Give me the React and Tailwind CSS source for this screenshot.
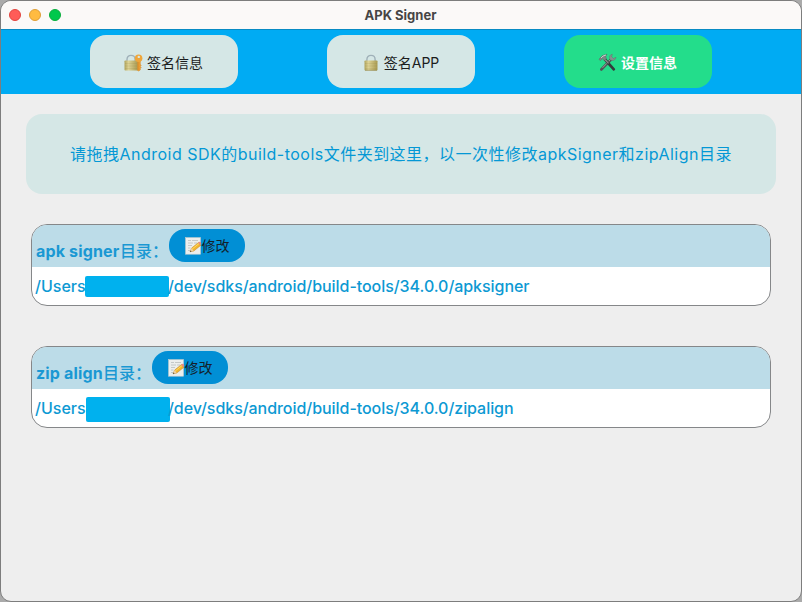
import React from 'react';

function Padlock({ className }) {
  return (
    <svg className={className} viewBox="0 0 14 18" fill="none">
      <defs>
        <linearGradient id="brass" x1="0" x2="1" y1="0" y2="0">
          <stop offset="0" stopColor="#b0a45c" />
          <stop offset="0.3" stopColor="#ddd294" />
          <stop offset="1" stopColor="#a89a52" />
        </linearGradient>
      </defs>
      <path d="M2.9 8V5.4C2.9 2.9 4.5 1.4 7 1.4s4.1 1.500 4.1 4V8" stroke="#9fb0b8" strokeWidth="1.4" />
      <rect x="0.5" y="6.500" width="13" height="10" rx="0.8" fill="url(#brass)" />
      <path d="M1 9.500h12M1 12h12M1 14.500h12" stroke="#8f8240" strokeWidth="0.400" opacity="0.400" />
      <path d="M1 16.200h12" stroke="#85783c" strokeWidth="0.600" />
    </svg>
  );
}

function LockKeyIcon() {
  return (
    <svg className="h-[18px] w-[19px] shrink-0" viewBox="0 0 19 18" fill="none">
      <defs>
        <linearGradient id="lockBody" x1="0" x2="1" y1="0" y2="0">
          <stop offset="0" stopColor="#b0a45c" />
          <stop offset="0.3" stopColor="#ddd294" />
          <stop offset="1" stopColor="#a89a52" />
        </linearGradient>
      </defs>
      <path d="M3 8V5.400C3 2.900 4.500 1.400 7 1.400s4.100 1.500 4.100 4V8" stroke="#9fb0b8" strokeWidth="1.400" />
      <path d="M13.400 6v10.400l1.200.6 1.700-1v-1.600l.9-.9-.9-1 .9-1.200-.9-1V6z" fill="#eb9d33" stroke="#d48624" strokeWidth="0.500" />
      <rect x="0.500" y="6.500" width="13.300" height="10" rx="0.800" fill="url(#lockBody)" />
      <path d="M1 9.500h12M1 12h12M1 14.500h12" stroke="#8f8240" strokeWidth="0.400" opacity="0.400" />
      <path d="M13.400 7h1.200v9h-1.200z" fill="#d98d2a" />
      <circle cx="14.600" cy="4.200" r="3.800" fill="#efa63b" />
      <circle cx="14.800" cy="2.900" r="1.200" fill="#d5e7e6" />
    </svg>
  );
}

function ToolsIcon() {
  return (
    <svg className="h-[19px] w-[19px] shrink-0" viewBox="0 0 19 19" fill="none">
      <path d="M13 6.500 3.300 16.500" stroke="#4f5858" strokeWidth="2.600" strokeLinecap="round" />
      <path d="M13 6 4.500 14.800" stroke="#a3adab" strokeWidth="0.800" />
      <path d="M14.300 1.300c-2.200.3-3.200 2.100-2.500 4.300l1.700 1.800c2.200.5 4.300-.8 4.500-3.100l-2.500 1.200-1.900-1.600z" fill="#87918f" stroke="#65706d" strokeWidth="0.500" />
      <path d="M7 6.500 15.800 16.300" stroke="#343c3c" strokeWidth="2.700" strokeLinecap="round" />
      <path d="M7 6.500 10.500 10.300" stroke="#8b9694" strokeWidth="1.200" />
      <path d="M1 6.300 4.200 2.600 9 1.200l-1.300 2 .6 2.500-2.200 1.800-1.900-1.900-1.700 2.100z" fill="#7c8684" stroke="#5a6462" strokeWidth="0.500" />
      <path d="M3 5 5 3 8 2" stroke="#ced4d3" strokeWidth="0.900" />
    </svg>
  );
}

function MemoIcon() {
  return (
    <svg className="h-[18px] w-[17px] shrink-0" viewBox="0 0 17 18" fill="none">
      <rect x="0.600" y="0.600" width="14.900" height="16.600" fill="#eceeed" stroke="#c6cccc" strokeWidth="0.600" />
      <path d="M3 3.500h3M7 3.500h6M3 6h5M9 6h3M3 8.500h4M3 11h2.500M3 13.500h2" stroke="#c0c3c4" strokeWidth="0.900" />
      <path d="m5 14.800 1.600-3.700 7-5.700 2.300 2.800-7.100 5.800z" fill="#f3b62f" stroke="#bd8028" strokeWidth="0.500" />
      <path d="m7.200 12 6.900-5.500" stroke="#ffdc63" strokeWidth="1" />
      <path d="m13.100 5.800 1.200-.9c1-.4 2.400 1.400 1.800 2.200L15 8z" fill="#e58a86" />
      <path d="m5 14.800 1.600-3.700 2.100 2.800z" fill="#efcfa0" />
      <path d="m4.900 15 .6-1.500 1 .9z" fill="#3a3a3a" />
    </svg>
  );
}

function NavButton({ icon, label, active }) {
  return (
    <button
      className={`flex h-[53px] w-[148px] items-center justify-center rounded-[16px] pt-[2px] pr-px text-[14px] leading-5 ${
        active ? 'bg-[#23dd8b] font-bold text-white' : 'bg-[#d5e7e6] text-[#1b1d1d]'
      }`}
    >
      {icon}
      <span className="ml-1">{label}</span>
    </button>
  );
}

function PathCard({ name, nameClass, tail, tailClass, maskClass }) {
  return (
    <section className="h-[82px] overflow-hidden rounded-[16px] border border-[#858789] bg-white text-[16px] text-[#0c99d3]">
      <div className="flex h-[42px] items-start bg-[#bcdce8] pl-1">
        <h2 className="flex pt-[14px] leading-6 whitespace-nowrap text-[#1a98d3]">
          <span className={`font-bold ${nameClass}`}>{name}</span>
          <span className="font-medium">目录：</span>
        </h2>
        <button className="mt-1 ml-[1px] flex h-[33px] w-[76px] items-center justify-center rounded-[16px] bg-[#018fd5] pt-[1px] text-[14px] leading-5 text-[#14202a]">
          <MemoIcon />
          <span>修改</span>
        </button>
      </div>
      <div className="flex h-[38px] items-center pl-1 font-medium whitespace-nowrap">
        <span className="-ml-px w-[50px] tracking-[0px]">/Users</span>
        <span className={`w-[84px] shrink-0 rounded-[2px] bg-[#00b1ee] ${maskClass}`} />
        <span className={tailClass}>{tail}</span>
      </div>
    </section>
  );
}

export default function App() {
  return (
    <div className="h-[602px] w-[802px] bg-[#aaa] font-['Inter','Noto_Sans_CJK_SC',sans-serif]">
      <div className="flex h-full flex-col overflow-hidden rounded-[11px] border border-[#7d7d7d] bg-[#eeeeee]">
        <header className="grid h-[28px] shrink-0 grid-cols-3 items-center bg-[#fbf9f8]">
          <div className="flex gap-2 pl-2">
            <span className="size-3 rounded-full border border-[#e1443e] bg-[#ff5c58]" />
            <span className="size-3 rounded-full border border-[#dd9d35] bg-[#ffbb41]" />
            <span className="size-3 rounded-full border border-[#08ad3c] bg-[#00c84c]" />
          </div>
          <h1 className="-mt-px pr-px text-center text-[13px] leading-4 font-bold text-[#464545]">APK Signer</h1>
        </header>
        <nav className="flex h-[65px] shrink-0 items-start justify-evenly border-t border-[#078bc4] bg-[#00abf3] pt-[5px]">
          <NavButton icon={<LockKeyIcon />} label="签名信息" />
          <NavButton icon={<Padlock className="mr-[2px] ml-[2px] h-[18px] w-[14px] shrink-0" />} label="签名APP" />
          <NavButton icon={<ToolsIcon />} label="设置信息" active />
        </nav>
        <main className="flex flex-col px-[25px] pt-5">
          <div className="flex h-20 items-center justify-center rounded-[16px] bg-[#d5e7e6] text-[16px] tracking-[0.48px] whitespace-nowrap text-[#0498d5]">
            请拖拽Android SDK的build-tools文件夹到这里，以一次性修改apkSigner和zipAlign目录
          </div>
          <div className="mt-[30px] flex flex-col gap-10 px-[5px]">
            <PathCard
              name="apk signer"
              nameClass="w-[84px] tracking-[0.15px]"
              tail="/dev/sdks/android/build-tools/34.0.0/apksigner"
              tailClass="-ml-px tracking-[-0.05px]"
              maskClass="h-[21px]"
            />
            <PathCard
              name="zip align"
              nameClass="w-[67px] tracking-[0.15px]"
              tail="/dev/sdks/android/build-tools/34.0.0/zipalign"
              tailClass="-ml-[2px] tracking-[-0.05px]"
              maskClass="ml-px h-[25px] mt-[2px]"
            />
          </div>
        </main>
      </div>
    </div>
  );
}
